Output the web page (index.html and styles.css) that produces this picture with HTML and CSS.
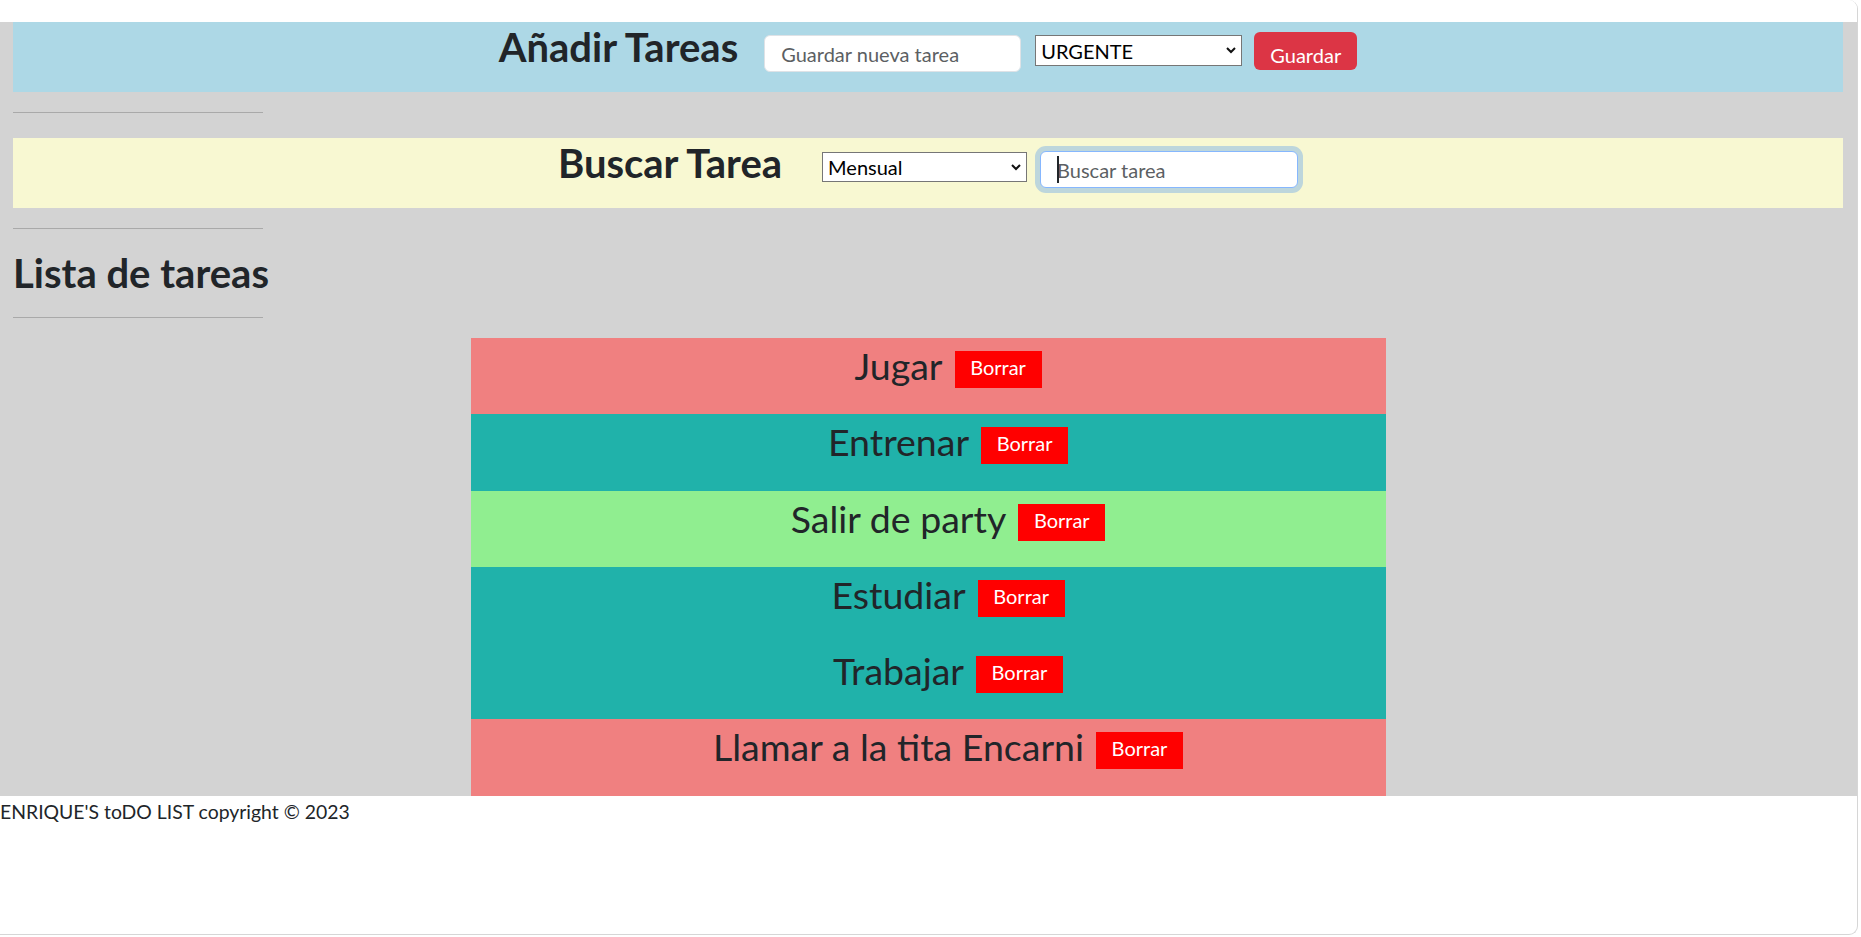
FILE: index.html
```html
<!DOCTYPE html>
<html lang="es">
<head>
<meta charset="utf-8">
<title>ENRIQUE'S toDO LIST</title>
<link rel="stylesheet" href="styles.css">
</head>
<body>
<div class="window">
  <div class="topbar"></div>
  <main class="page">
    <section class="bar bar-add">
      <h2 class="bar-title title-add">Añadir Tareas</h2>
      <input class="field field-new" type="text" placeholder="Guardar nueva tarea">
      <div class="select-wrap select-priority">
        <select class="picker">
          <option>URGENTE</option>
          <option>DIARIA</option>
          <option>MENSUAL</option>
        </select>
        <svg class="chev" width="10" height="7" viewBox="0 0 10 7"><polyline points="1,1 5,5 9,1" fill="none" stroke="#111" stroke-width="2"/></svg>
      </div>
      <button class="btn-save" type="button">Guardar</button>
    </section>

    <hr class="rule rule-first">

    <section class="bar bar-search">
      <h2 class="bar-title title-search">Buscar Tarea</h2>
      <div class="select-wrap select-period">
        <select class="picker">
          <option>Mensual</option>
          <option>Diaria</option>
          <option>Urgente</option>
        </select>
        <svg class="chev" width="10" height="7" viewBox="0 0 10 7"><polyline points="1,1 5,5 9,1" fill="none" stroke="#111" stroke-width="2"/></svg>
      </div>
      <div class="search-wrap">
        <input class="field field-search" type="text" placeholder="Buscar tarea">
        <span class="caret"></span>
      </div>
    </section>

    <hr class="rule">
    <h2 class="list-title">Lista de tareas</h2>
    <hr class="rule">

    <ul class="task-list">
      <li class="task task-urgent"><span class="task-name">Jugar</span><button class="btn-delete" type="button">Borrar</button></li>
      <li class="task task-monthly"><span class="task-name">Entrenar</span><button class="btn-delete" type="button">Borrar</button></li>
      <li class="task task-daily"><span class="task-name">Salir de party</span><button class="btn-delete" type="button">Borrar</button></li>
      <li class="task task-monthly"><span class="task-name">Estudiar</span><button class="btn-delete" type="button">Borrar</button></li>
      <li class="task task-monthly"><span class="task-name">Trabajar</span><button class="btn-delete" type="button">Borrar</button></li>
      <li class="task task-urgent"><span class="task-name">Llamar a la tita Encarni</span><button class="btn-delete" type="button">Borrar</button></li>
    </ul>
  </main>
  <footer class="footer">ENRIQUE'S toDO LIST copyright © 2023</footer>
</div>
</body>
</html>
```
FILE: styles.css
```css
* {
  box-sizing: border-box;
}

html, body {
  margin: 0;
  padding: 0;
  background: #ffffff;
}

body {
  font-family: Lato, "Liberation Sans", sans-serif;
  color: #212529;
  font-size: 20px;
  line-height: 30px;
}

.window {
  width: 1858px;
  height: 935px;
  border-right: 1px solid #d6d6d6;
  border-bottom: 1px solid #d6d6d6;
  border-radius: 0 9px 9px 0;
  overflow: hidden;
  display: flex;
  flex-direction: column;
  background: #ffffff;
}

.topbar {
  height: 22px;
  flex: none;
  background: #ffffff;
}

.page {
  background: #d3d3d3;
  padding: 0 14px 0 13px;
  flex: none;
}

/* ---------- bars ---------- */
.bar {
  height: 70px;
  display: flex;
  justify-content: center;
  align-items: flex-start;
}

.bar-add {
  background: #add8e6;
}

.bar-search {
  background: #f8f8d2;
  margin-top: 25px;
}

.bar-title {
  margin: 0;
  font-size: 40px;
  line-height: 48px;
  font-weight: 700;
  white-space: nowrap;
}

.title-add {
  margin-top: 1px;
  margin-right: 26px;
}

.title-search {
  margin-top: 1px;
  margin-right: 40px;
}

.field {
  height: 37px;
  width: 257px;
  margin-top: 13px;
  padding: 0 16px;
  border: 1px solid #dee2e6;
  border-radius: 6px;
  background: #ffffff;
  font-family: inherit;
  font-size: 20px;
  color: #212529;
  outline: none;
}

.field::placeholder {
  color: #5c5f63;
}

.field-new {
  margin-right: 14px;
}

.select-wrap {
  position: relative;
  margin-top: 13px;
}

.picker {
  display: block;
  appearance: none;
  -webkit-appearance: none;
  height: 31px;
  padding: 0 0 0 5px;
  border: 1px solid #767676;
  border-radius: 0;
  background: #ffffff;
  font-family: inherit;
  font-size: 20px;
  color: #000000;
}

.select-priority .picker {
  width: 207px;
}

.select-priority {
  margin-right: 12px;
}

.select-period {
  margin-top: 14px;
  margin-right: 13px;
}

.select-period .picker {
  width: 205px;
  height: 30px;
}

.chev {
  position: absolute;
  right: 6px;
  top: 12px;
  pointer-events: none;
}

.btn-save {
  width: 103px;
  height: 38px;
  margin-top: 10px;
  padding: 8px 0 0;
  border: none;
  border-radius: 6px;
  background: #dc3545;
  color: #ffffff;
  font-family: inherit;
  font-size: 20px;
  line-height: 30px;
  text-align: center;
}

.search-wrap {
  position: relative;
  margin-top: 13px;
}

.field-search {
  display: block;
  width: 258px;
  margin-top: 0;
  border-color: #86b7fe;
  box-shadow: 0 0 0 5px rgba(13, 110, 253, 0.25);
}

.caret {
  position: absolute;
  left: 17px;
  top: 5px;
  width: 2px;
  height: 27px;
  background: #212529;
}

/* ---------- rules & titles ---------- */
.rule {
  width: 250px;
  margin: 20px 0 0;
  border: 0;
  border-top: 1px solid #a9a9a9;
  height: 0;
}

.list-title {
  margin: 20px 0 0;
  font-size: 40px;
  line-height: 48px;
  font-weight: 700;
}

/* ---------- tasks ---------- */
.task-list {
  list-style: none;
  width: 915px;
  margin: 20px auto 0;
  padding: 0;
}

.task {
  height: 76.3px;
  display: flex;
  justify-content: center;
  align-items: flex-start;
  padding-left: 40px;
}

.task-urgent {
  background: #f08080;
}

.task-monthly {
  background: #20b2aa;
}

.task-daily {
  background: #90ee90;
}

.task-name {
  font-size: 37.5px;
  line-height: 56px;
  white-space: nowrap;
}

.btn-delete {
  width: 87px;
  height: 37px;
  margin: 13px 0 0 12px;
  padding: 0 0 4px;
  border: none;
  border-radius: 0;
  background: #ff0000;
  color: #ffffff;
  font-family: inherit;
  font-size: 20px;
  line-height: 25px;
  text-align: center;
  align-self: flex-start;
}

/* ---------- footer ---------- */
.footer {
  padding-top: 1px;
  font-size: 19.4px;
  line-height: 30px;
  white-space: nowrap;
}
```
